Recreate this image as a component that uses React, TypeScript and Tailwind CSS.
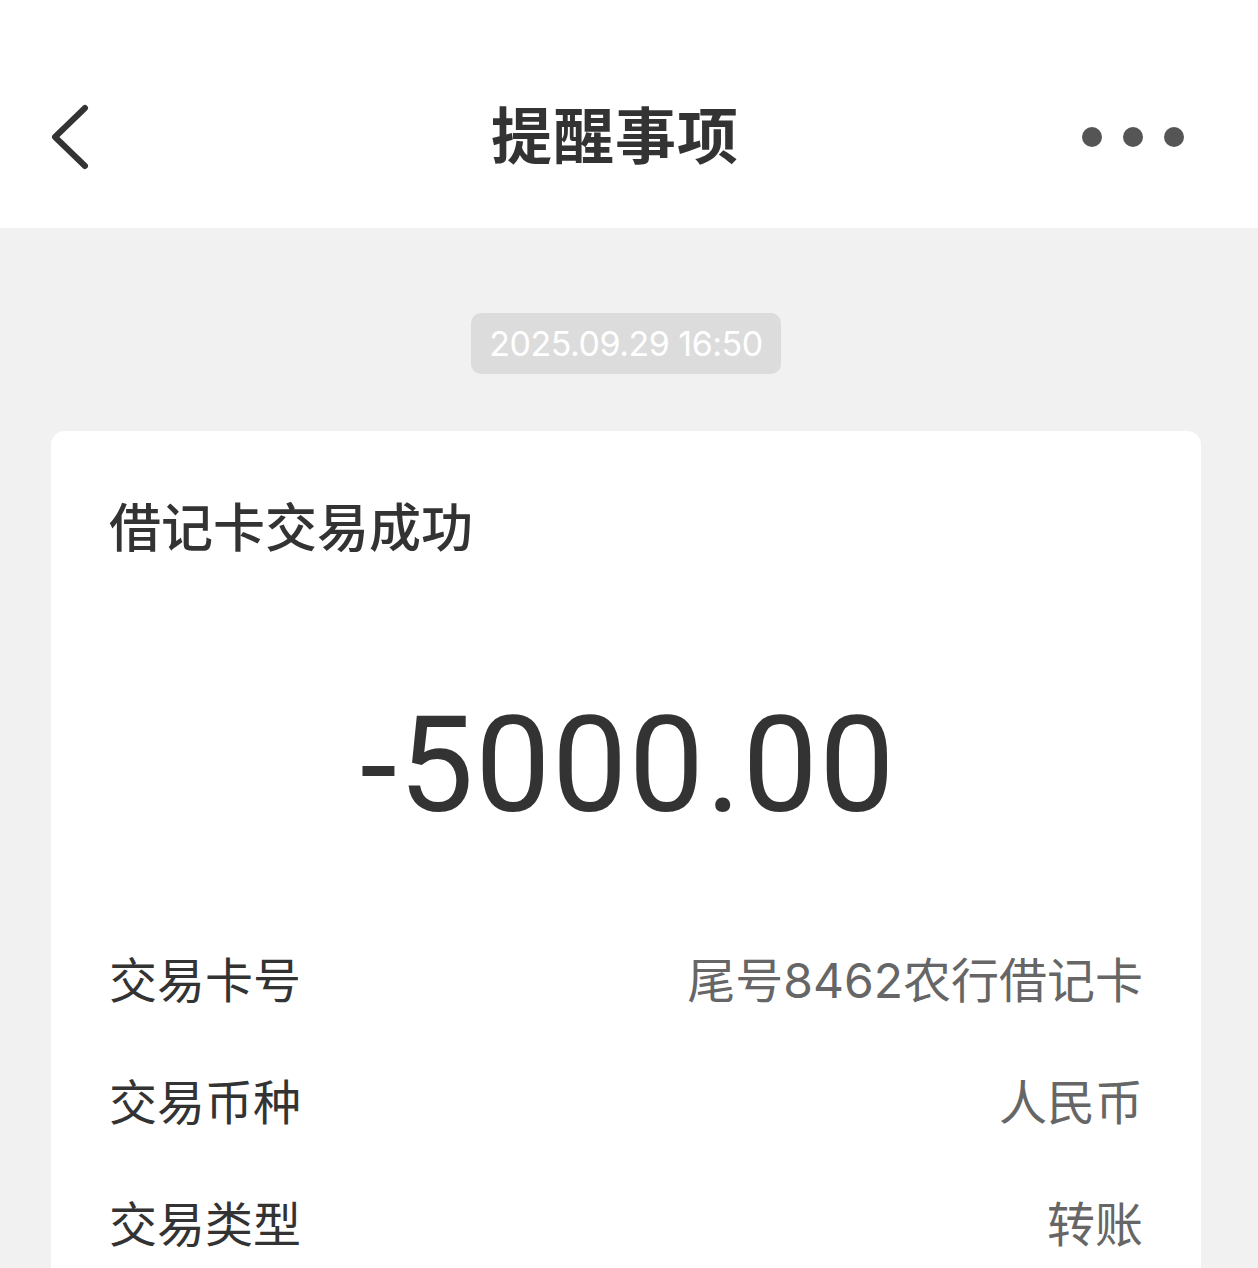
import React from 'react';

const rows = [
  { label: '交易卡号', value: '尾号8462农行借记卡' },
  { label: '交易币种', value: '人民币' },
  { label: '交易类型', value: '转账' },
];

export default function App() {
  return (
    <div
      className="min-h-[1268px] w-[1258px] bg-[#f1f1f1] overflow-hidden"
      style={{ fontFamily: 'Inter, "Noto Sans CJK SC", sans-serif' }}
    >
      {/* Top bar */}
      <header className="h-[228px] bg-white flex items-end pb-[58px]">
        <div className="w-full h-[66px] grid grid-cols-[1fr_auto_1fr] items-center px-[50px]">
          <svg width="44" height="66" viewBox="0 0 44 66" className="text-[#333]">
            <path d="M35 4 L5 33 L35 62" fill="none" stroke="currentColor" strokeWidth="6" strokeLinecap="round" strokeLinejoin="round" />
          </svg>
          <h1 className="mr-[28px] text-[61px] font-bold text-[#333] leading-none tracking-[1px]">提醒事项</h1>
          <div className="flex items-center justify-end gap-[21px] pr-[24px]">
            <span className="w-[20px] h-[20px] rounded-full bg-[#555]" />
            <span className="w-[20px] h-[20px] rounded-full bg-[#555]" />
            <span className="w-[20px] h-[20px] rounded-full bg-[#555]" />
          </div>
        </div>
      </header>

      <main className="pl-[51px] pr-[57px] pt-[85px]">
        <div className="flex justify-center">
          <div className="bg-[#dcdcdc] text-white rounded-[10px] h-[61px] px-[18px] flex items-center text-[34px] tracking-[-0.5px]">
            2025.09.29 16:50
          </div>
        </div>

        <div className="mt-[57px] bg-white rounded-[14px] px-[58px] pt-[66px] pb-[40px]">
          <h2 className="text-[52px] font-medium text-[#333] leading-[64px]">借记卡交易成功</h2>

          <div
            className="mt-[137px] pl-[4px] text-center text-[134px] text-[#333] leading-[136px] tracking-[1.5px]"
            style={{ fontFamily: 'Roboto, sans-serif' }}
          >
            -5000.00
          </div>

          <div className="mt-[86px] flex flex-col">
            {rows.map((r) => (
              <div key={r.label} className="h-[122px] flex items-center justify-between">
                <span className="text-[48px] text-[#333]">{r.label}</span>
                <span className="text-[48px] text-[#666]">{r.value}</span>
              </div>
            ))}
          </div>
        </div>
      </main>
    </div>
  );
}
